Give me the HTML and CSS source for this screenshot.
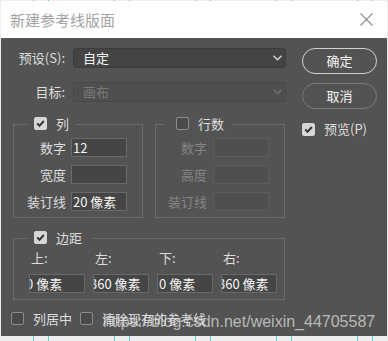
FILE: index.html
```html
<!DOCTYPE html>
<html lang="zh-CN">
<head>
    <meta charset="UTF-8">
    <title>新建参考线版面</title>
    <link rel="stylesheet" href="styles.css">
</head>
<body>
    <div class="win">
        <div class="guides guides-top"></div>
        <div class="titlebar">
            <span class="title">新建参考线版面</span>
            <svg class="close" width="13" height="13" viewBox="0 0 13 13">
                <path d="M0.5 0.5 L12.5 12.5 M12.5 0.5 L0.5 12.5" stroke="#8c8c8c" stroke-width="1.1" fill="none"/>
            </svg>
        </div>

        <div class="dialog">
            <div class="main">
                <div class="row">
                    <label class="row-label">预设(S):</label>
                    <div class="select">
                        <span>自定</span>
                        <svg class="chev" width="9" height="6" viewBox="0 0 9 6"><path d="M0.5 0.8 L4.5 4.8 L8.5 0.8" stroke="#d8d8d8" stroke-width="1.3" fill="none"/></svg>
                    </div>
                </div>
                <div class="row row-second">
                    <label class="row-label">目标:</label>
                    <div class="select disabled">
                        <span>画布</span>
                        <svg class="chev" width="9" height="6" viewBox="0 0 9 6"><path d="M0.5 0.8 L4.5 4.8 L8.5 0.8" stroke="#727272" stroke-width="1.3" fill="none"/></svg>
                    </div>
                </div>

                <div class="groups">
                    <fieldset class="box box-cols">
                        <legend><span class="check on"></span><span class="legend-text">列</span></legend>
                        <div class="field-row"><span class="field-label">数字</span><div class="field">12</div></div>
                        <div class="field-row"><span class="field-label">宽度</span><div class="field"></div></div>
                        <div class="field-row"><span class="field-label">装订线</span><div class="field">20 像素</div></div>
                    </fieldset>
                    <fieldset class="box box-rows">
                        <legend><span class="check"></span><span class="legend-text">行数</span></legend>
                        <div class="field-row off"><span class="field-label">数字</span><div class="field"></div></div>
                        <div class="field-row off"><span class="field-label">高度</span><div class="field"></div></div>
                        <div class="field-row off"><span class="field-label">装订线</span><div class="field"></div></div>
                    </fieldset>
                </div>

                <fieldset class="box box-margin">
                    <legend><span class="check on"></span><span class="legend-text">边距</span></legend>
                    <div class="margin-grid">
                        <span class="margin-label">上:</span>
                        <span class="margin-label">左:</span>
                        <span class="margin-label">下:</span>
                        <span class="margin-label">右:</span>
                        <div class="field"><span class="scrolled">0 像素</span></div>
                        <div class="field"><span class="scrolled">360 像素</span></div>
                        <div class="field"><span>0 像素</span></div>
                        <div class="field"><span class="scrolled">360 像素</span></div>
                    </div>
                </fieldset>

                <div class="options">
                    <span class="check"></span><span class="opt-text">列居中</span>
                    <span class="check"></span><span class="opt-text">清除现有的参考线</span>
                </div>
            </div>

            <div class="side">
                <button class="btn btn-ok">确定</button>
                <button class="btn btn-cancel">取消</button>
                <div class="preview">
                    <span class="check on"></span><span>预览(P)</span>
                </div>
            </div>
        </div>
        <div class="guides guides-bottom"></div>

        <div class="watermark">https://blog.csdn.net/weixin_44705587</div>
    </div>
</body>
</html>
```

FILE: styles.css
```css
body {
    margin: 0;
    padding: 0;
    background-color: #ececec;
    font-family: "Noto Sans CJK SC", "Liberation Sans", sans-serif;
    font-size: 13px;
    color: #dedede;
}

.win {
    position: relative;
    width: 388px;
    height: 341px;
    overflow: hidden;
}

.guides {
    margin: 0 1px;
    background-color: #eeeeee;
    background-image: repeating-linear-gradient(to right,
        transparent 0, transparent 32px,
        #5fcfcf 32px, #5fcfcf 33px,
        transparent 33px, transparent 47px,
        #5fcfcf 47px, #5fcfcf 48px,
        transparent 48px, transparent 81px);
}

.guides-top {
    height: 1px;
}

.guides-bottom {
    height: 5px;
}

.titlebar {
    height: 37px;
    margin: 0 1px;
    background: #fff;
    display: flex;
    align-items: center;
    justify-content: space-between;
    padding: 0 14px 0 9px;
}

.title {
    font-size: 15px;
    color: #a3a3a3;
    line-height: 20px;
}

.close {
    display: block;
}

.dialog {
    height: 298px;
    margin: 0 1px;
    background-color: #535353;
    display: flex;
}

.main {
    width: 274px;
    padding: 10px 0 0 12px;
}

.row {
    display: flex;
    align-items: center;
    height: 20px;
}

.row-second {
    margin-top: 14px;
}

.row-label {
    width: 52px;
    text-align: right;
    margin-right: 8px;
    line-height: 16px;
}

.select {
    box-sizing: border-box;
    width: 213px;
    height: 20px;
    background-color: #444444;
    border: 1px solid #3c3c3c;
    border-radius: 3px;
    display: flex;
    align-items: center;
    justify-content: space-between;
    padding: 0 3px 0 9px;
    color: #f2f2f2;
    line-height: 16px;
}

.select.disabled {
    background-color: #4f4f4f;
    border-color: #474747;
    color: #7c7c7c;
}

.chev {
    display: block;
}

.groups {
    display: grid;
    grid-template-columns: 130px 130px;
    column-gap: 12px;
    margin-top: 15px;
}

fieldset.box {
    margin: 0;
    padding: 7px 0 6px 0;
    border: 1px solid #6c6c6c;
    min-width: 0;
    box-sizing: border-box;
}

fieldset.box legend {
    height: 14px;
    line-height: 14px;
    margin-left: 13px;
    padding: 0 7px 0 7px;
    white-space: nowrap;
}

fieldset.box-rows legend {
    margin-left: 8px;
    padding: 0 8px 0 12px;
}

fieldset.box-margin legend {
    margin-left: -2px;
    padding: 0 10px 0 7px;
}

.legend-text {
    display: inline-block;
    vertical-align: top;
    margin-left: 9px;
}

.check {
    display: inline-block;
    vertical-align: top;
    box-sizing: border-box;
    width: 13px;
    height: 13px;
    border: 1px solid #8c8c8c;
    border-radius: 2px;
    background-color: #4a4a4a;
}

.check.on {
    border-color: #d6d6d6;
    background-color: #d6d6d6;
    background-image: url("data:image/svg+xml;utf8,<svg xmlns='http://www.w3.org/2000/svg' width='11' height='11' viewBox='0 0 11 11'><path d='M2.2 5.4 L4.5 7.8 L8.8 3' stroke='%23343434' stroke-width='2' fill='none'/></svg>");
    background-repeat: no-repeat;
    background-position: center;
}

.field-row {
    display: flex;
    align-items: center;
    height: 19px;
}

.field-row + .field-row {
    margin-top: 8px;
}

.box-cols .field-label {
    width: 52px;
    margin-right: 5px;
}

.box-rows .field-label {
    width: 51px;
    margin-right: 6px;
}

.field-label {
    text-align: right;
    line-height: 16px;
}

.field {
    box-sizing: border-box;
    width: 56px;
    height: 19px;
    background-color: #454545;
    border: 1px solid #696969;
    padding-left: 1px;
    line-height: 17px;
    color: #f4f4f4;
    overflow: hidden;
    white-space: nowrap;
}

.field-row.off .field-label {
    color: #858585;
}

.field-row.off .field {
    background-color: #4f4f4f;
    border-color: #5d5d5d;
}

fieldset.box-margin {
    width: 272px;
    margin-top: 13px;
    padding: 5px 0 6px 15px;
}

.margin-grid {
    display: grid;
    grid-template-columns: repeat(4, 56px);
    column-gap: 8px;
    row-gap: 8px;
}

.margin-label {
    padding-left: 2px;
    line-height: 16px;
}

.scrolled {
    display: inline-block;
    margin-left: -5px;
}

.options {
    display: flex;
    align-items: center;
    margin: 12px 0 0 -2px;
    height: 13px;
    line-height: 16px;
}

.opt-text {
    margin: 0 8px 0 9px;
}

.side {
    padding: 10px 0 0 15px;
    display: flex;
    flex-direction: column;
    align-items: flex-start;
}

.btn {
    box-sizing: border-box;
    width: 75px;
    height: 26px;
    border-radius: 13px;
    background: transparent;
    border: 1.5px solid #d2d2d2;
    color: #f4f4f4;
    font-family: "Noto Sans CJK SC", sans-serif;
    font-size: 13px;
    line-height: 16px;
    padding: 0;
}

.btn-cancel {
    margin-top: 9px;
    border-color: #7a7a7a;
}

.preview {
    display: flex;
    align-items: center;
    margin-top: 12px;
    line-height: 16px;
}

.preview .check {
    margin-right: 9px;
}

.watermark {
    position: absolute;
    left: 103px;
    top: 314px;
    font-family: "Liberation Sans", sans-serif;
    font-size: 16px;
    line-height: 16px;
    color: rgba(225, 225, 225, 0.72);
    white-space: nowrap;
    pointer-events: none;
}
```
